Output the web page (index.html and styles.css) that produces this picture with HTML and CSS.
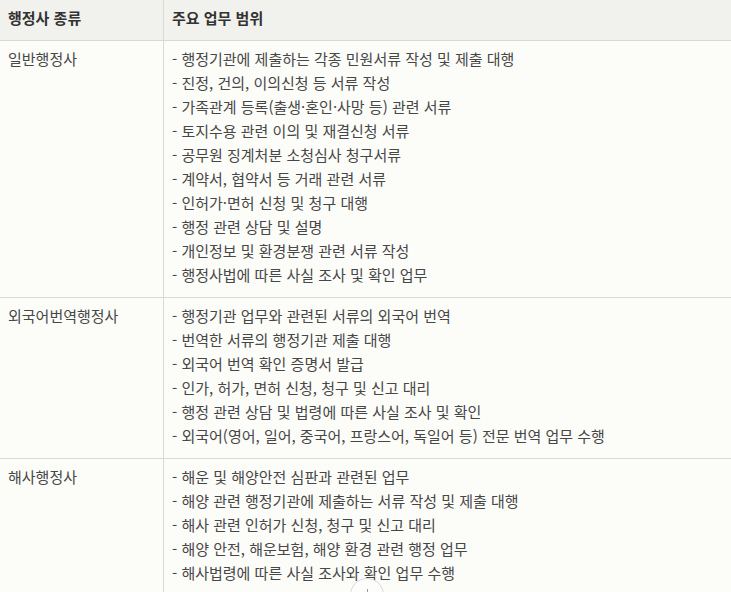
FILE: index.html
```html
<!DOCTYPE html>
<html lang="ko">
<head>
<meta charset="utf-8">
<link rel="stylesheet" href="styles.css">
</head>
<body>
<table class="tbl">
  <thead>
    <tr>
      <th class="c1">행정사 종류</th>
      <th class="c2">주요 업무 범위</th>
    </tr>
  </thead>
  <tbody>
    <tr>
      <td class="c1">일반행정사</td>
      <td class="c2">- 행정기관에 제출하는 각종 민원서류 작성 및 제출 대행<br>- 진정, 건의, 이의신청 등 서류 작성<br>- 가족관계 등록(출생·혼인·사망 등) 관련 서류<br>- 토지수용 관련 이의 및 재결신청 서류<br>- 공무원 징계처분 소청심사 청구서류<br>- 계약서, 협약서 등 거래 관련 서류<br>- 인허가·면허 신청 및 청구 대행<br>- 행정 관련 상담 및 설명<br>- 개인정보 및 환경분쟁 관련 서류 작성<br>- 행정사법에 따른 사실 조사 및 확인 업무</td>
    </tr>
    <tr>
      <td class="c1">외국어번역행정사</td>
      <td class="c2">- 행정기관 업무와 관련된 서류의 외국어 번역<br>- 번역한 서류의 행정기관 제출 대행<br>- 외국어 번역 확인 증명서 발급<br>- 인가, 허가, 면허 신청, 청구 및 신고 대리<br>- 행정 관련 상담 및 법령에 따른 사실 조사 및 확인<br>- 외국어(영어, 일어, 중국어, 프랑스어, 독일어 등) 전문 번역 업무 수행</td>
    </tr>
    <tr>
      <td class="c1">해사행정사</td>
      <td class="c2">- 해운 및 해양안전 심판과 관련된 업무<br>- 해양 관련 행정기관에 제출하는 서류 작성 및 제출 대행<br>- 해사 관련 인허가 신청, 청구 및 신고 대리<br>- 해양 안전, 해운보험, 해양 환경 관련 행정 업무<br>- 해사법령에 따른 사실 조사와 확인 업무 수행</td>
    </tr>
  </tbody>
</table>
<div class="fab"><span class="fab-v"></span><span class="fab-h"></span></div>
</body>
</html>
```

FILE: styles.css
```css
html, body {
  margin: 0;
  padding: 0;
  background: #fcfcf9;
  overflow: hidden;
}
body {
  font-family: "Noto Sans CJK KR", "Noto Sans", sans-serif;
  font-size: 15px;
  color: #474747;
  position: relative;
  height: 592px;
}
.tbl {
  width: 731px;
  border-collapse: collapse;
  table-layout: fixed;
}
.tbl th, .tbl td {
  text-align: left;
  vertical-align: top;
  line-height: 24px;
  padding: 6px 8px 10px;
  border-bottom: 1px solid #d9d9d5;
}
.tbl th {
  background: #f1f1ed;
  color: #333;
  font-weight: 600;
}
.tbl .c1 {
  width: 147px;
  border-right: 1px solid #d9d9d5;
}
.fab {
  position: absolute;
  left: 350px;
  top: 578px;
  width: 34px;
  height: 34px;
  border-radius: 50%;
  border: 1px solid #d8d8d8;
  background: #fdfdfb;
  box-sizing: border-box;
}
.fab-v {
  position: absolute;
  left: 16px;
  top: 10px;
  width: 1px;
  height: 13px;
  background: #999;
}
.fab-h {
  position: absolute;
  left: 10px;
  top: 16px;
  width: 13px;
  height: 1px;
  background: #999;
}
```
